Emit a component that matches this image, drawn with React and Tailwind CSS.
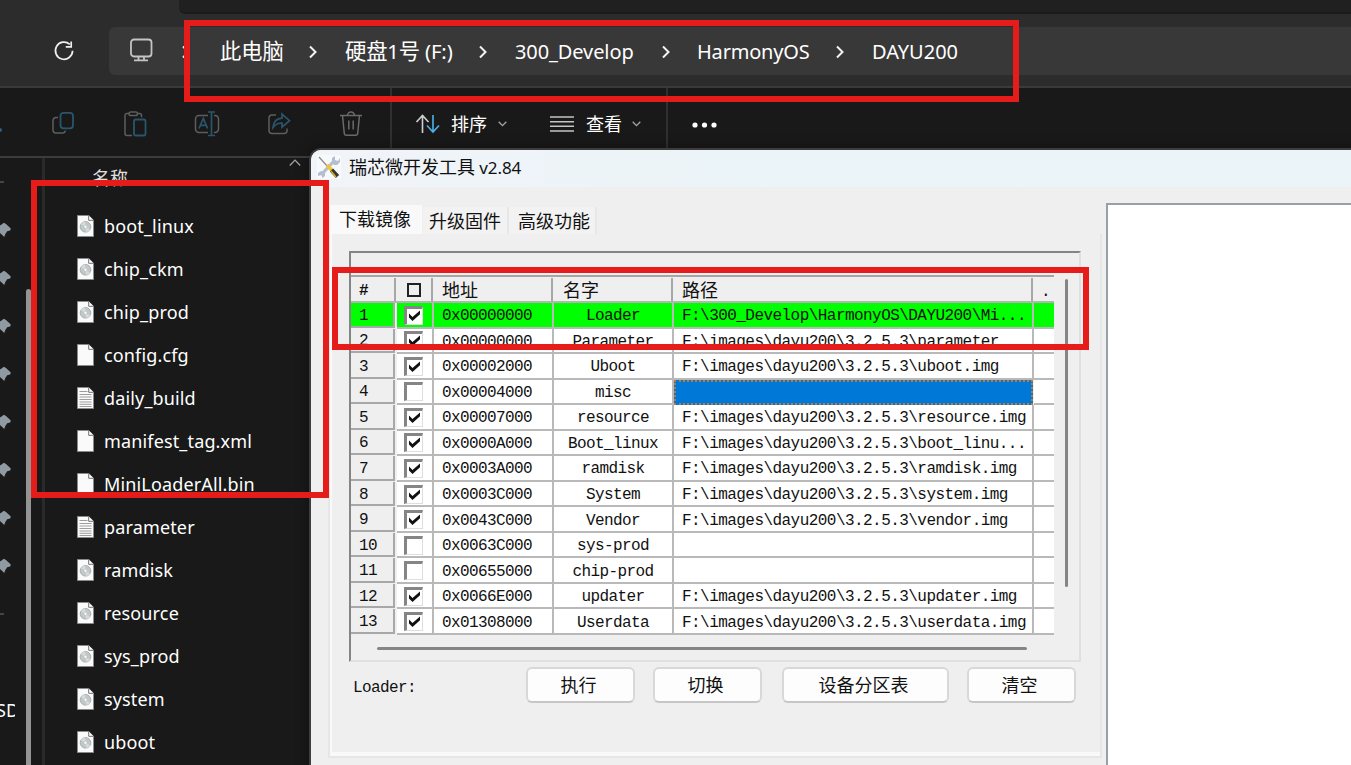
import React from 'react';

const files = [
  ['boot_linux', 'disc'],
  ['chip_ckm', 'disc'],
  ['chip_prod', 'disc'],
  ['config.cfg', 'blank'],
  ['daily_build', 'text'],
  ['manifest_tag.xml', 'blank'],
  ['MiniLoaderAll.bin', 'blank'],
  ['parameter', 'text'],
  ['ramdisk', 'disc'],
  ['resource', 'disc'],
  ['sys_prod', 'disc'],
  ['system', 'disc'],
  ['uboot', 'disc'],
];

const rows = [
  [true, '0x00000000', 'Loader', 'F:\\300_Develop\\HarmonyOS\\DAYU200\\Mi...'],
  [true, '0x00000000', 'Parameter', 'F:\\images\\dayu200\\3.2.5.3\\parameter'],
  [true, '0x00002000', 'Uboot', 'F:\\images\\dayu200\\3.2.5.3\\uboot.img'],
  [false, '0x00004000', 'misc', ''],
  [true, '0x00007000', 'resource', 'F:\\images\\dayu200\\3.2.5.3\\resource.img'],
  [true, '0x0000A000', 'Boot_linux', 'F:\\images\\dayu200\\3.2.5.3\\boot_linu...'],
  [true, '0x0003A000', 'ramdisk', 'F:\\images\\dayu200\\3.2.5.3\\ramdisk.img'],
  [true, '0x0003C000', 'System', 'F:\\images\\dayu200\\3.2.5.3\\system.img'],
  [true, '0x0043C000', 'Vendor', 'F:\\images\\dayu200\\3.2.5.3\\vendor.img'],
  [false, '0x0063C000', 'sys-prod', ''],
  [false, '0x00655000', 'chip-prod', ''],
  [true, '0x0066E000', 'updater', 'F:\\images\\dayu200\\3.2.5.3\\updater.img'],
  [true, '0x01308000', 'Userdata', 'F:\\images\\dayu200\\3.2.5.3\\userdata.img'],
];

function FileIcon({ kind }) {
  return (
    <svg width="18" height="23" viewBox="0 0 18 23" className="shrink-0">
      <path d="M.5.5h11.200l4.800 4.800v16.200H.5z" fill="#fafafa" stroke="#8a8a8a" />
      <path d="M11.700.5v4.800h4.800" fill="#fff" stroke="#6f6f6f" />
      {kind === 'disc' && (
        <g>
          <circle cx="8.500" cy="11.800" r="5.300" fill="#c2c7c8" stroke="#a3a9ab" strokeWidth=".9" />
          <path d="M8.500 11.800 4 9.200A5.200 5.200 0 0 1 8 6.600zM8.500 11.800l4.500 2.600a5.200 5.200 0 0 1-4 2.600z" fill="#d5dadb" />
          <circle cx="8.500" cy="11.800" r="1.500" fill="#fff" stroke="#b9bdbf" strokeWidth=".6" />
        </g>
      )}
      {kind === 'text' && (
        <path d="M2.500 4.500h8M2.500 7.500h12M2.500 10h12M2.500 12.500h12M2.500 15h12M2.500 17.300h12M2.500 19.500h12" stroke="#9d9d9d" strokeWidth="1" />
      )}
    </svg>
  );
}

function Crumb({ className, children }) {
  return <span className={'shrink-0 whitespace-nowrap leading-[30px] ' + className}>{children}</span>;
}

function Chevron({ className }) {
  return (
    <svg width="8" height="14" viewBox="0 0 8 14" className={'mt-[2px] shrink-0 ' + className}>
      <path d="M1 1.500 6.500 7 1 12.500" fill="none" stroke="#f2f2f2" strokeWidth="2" />
    </svg>
  );
}

function Down() {
  return (
    <svg width="9" height="6" viewBox="0 0 9 6" className="shrink-0">
      <path d="M.7.8 4.500 4.600 8.300.8" fill="none" stroke="#a6a6a6" strokeWidth="1.300" />
    </svg>
  );
}

function Pin() {
  return (
    <svg width="11" height="16" viewBox="0 0 11 16" className="shrink-0">
      <path d="M0 3.500 4 .8 6 2l4.800 4.500-.6 2-3 .8-2 3L4.300 15 0 11z" fill="#8f9aa2" />
    </svg>
  );
}

function Check({ on }) {
  return (
    <span className="flex h-[19px] w-[19px] shrink-0 items-start justify-center border-t-[3px] border-l-[3px] border-r border-b border-t-[#858585] border-l-[#858585] border-r-[#dedede] border-b-[#dedede] bg-white">
      {on && (
        <svg width="13" height="12" viewBox="0 0 13 12" className="mt-px">
          <path d="M1 3.600v4l3.500 3.300L12 4.200V.4L4.500 6.900z" fill="#111" />
        </svg>
      )}
    </span>
  );
}

function ToolbarIcons() {
  const s = { fill: 'none', strokeWidth: 1.5 };
  return (
    <div className="flex h-full items-center pt-[4px]">
      <div className="h-[4px] w-[2px] mt-3 rounded-r bg-[#27617c]" />
      <svg className="ml-[49px]" width="24" height="26" viewBox="0 0 24 26" {...s}>
        <path d="M7 6.500H5A3 3 0 0 0 2 9.500v9.500a3 3 0 0 0 3 3h6.500a3 3 0 0 0 3-2.300" stroke="#5e5e5e" />
        <rect x="9.500" y="1.800" width="12.500" height="15.500" rx="3" stroke="#2a566d" strokeWidth="1.800" />
      </svg>
      <svg className="ml-[48px]" width="24" height="26" viewBox="0 0 24 26" {...s}>
        <path d="M6 2.500H4A2 2 0 0 0 2 4.500v18a2 2 0 0 0 2 2h5M14.500 2.500h2a2 2 0 0 1 2 2v1.800" stroke="#5e5e5e" />
        <rect x="6" y="1" width="8.500" height="3.600" rx="1.800" stroke="#5e5e5e" />
        <rect x="11" y="8.500" width="11.500" height="16" rx="1.800" stroke="#2a566d" strokeWidth="1.800" />
      </svg>
      <svg className="ml-[47px]" width="26" height="26" viewBox="0 0 26 26" {...s}>
        <path d="M14 4.500H5a3.500 3.500 0 0 0-3.500 3.500v10A3.500 3.500 0 0 0 5 21.500h9M20 4.500h1a3.500 3.500 0 0 1 3.500 3.500v10a3.500 3.500 0 0 1-3.500 3.500h-1" stroke="#5e5e5e" />
        <path d="M5 17.500 9.300 7.500l4.300 10M6.300 14.300h6M14 1h7M14 24.500h7M17.500 1v23.500" stroke="#2a566d" strokeWidth="1.700" />
      </svg>
      <svg className="ml-[47px]" width="24" height="26" viewBox="0 0 24 26" {...s}>
        <path d="M9 4H5a3 3 0 0 0-3 3v12.500a3 3 0 0 0 3 3h12a3 3 0 0 0 3-3V17.500" stroke="#5e5e5e" />
        <path d="M15 3.200v4C9.500 7.500 6.500 11.500 6 16.500c2.500-3.500 5.200-4.500 9-4.500v4.200l7.500-6.500z" stroke="#2a566d" strokeWidth="1.700" />
      </svg>
      <svg className="ml-[48px]" width="24" height="26" viewBox="0 0 24 26" {...s}>
        <path d="M1 4.500h22M8.500 4.500a3.500 3.500 0 0 1 7 0M3.500 4.500l1.800 18A2.200 2.200 0 0 0 7.500 24.300h9a2.200 2.200 0 0 0 2.200-1.800l1.800-18M9.800 9.500v9M14.200 9.500v9" stroke="#6a6a6a" />
      </svg>
    </div>
  );
}

const cols = 'grid grid-cols-[46px_37px_120px_120px_360px_20px]';

function Table() {
  const head = 'mr-px mt-px flex items-center border-r-2 border-[#a8a8a8] ';
  return (
    <div className="w-[703px] font-['Liberation_Mono','Noto_Sans_CJK_SC',monospace] text-[16px] leading-none tracking-[-0.6px] text-[#111]">
      <div className={cols + ' h-[28px] border-y-2 border-[#a5a5a5] border-b-[#b4b4b4] bg-[#efefef]'}>
        <div className={head + 'pl-[8px] pt-[2px] font-bold'}>#</div>
        <div className={head + 'justify-center'}>
          <span className="h-[14px] w-[14px] border-2 border-[#222]" />
        </div>
        <div className={head + 'pl-[8px] pt-[4px] text-[18px] tracking-normal'}>地址</div>
        <div className={head + 'pl-[9px] pt-[4px] text-[18px] tracking-normal'}>名字</div>
        <div className={head + 'pl-[8px] pt-[4px] text-[18px] tracking-normal'}>路径</div>
        <div className="flex items-center pl-[7px] pt-[6px]">.</div>
      </div>
      <div className="grid h-[332px] grid-rows-[repeat(13,minmax(0,1fr))]">
        {rows.map(([on, addr, name, path], i) => {
          const bg = i === 0 ? 'bg-[#00ff00]' : 'bg-white';
          const cell = 'flex items-center border-b-2 border-r-2 border-[#b9b9b9] ' + bg;
          return (
            <div key={i} className={cols}>
              <div className={'mr-[2px] mb-px flex items-center border-b-2 border-r-2 border-[#a8a8a8] pl-[8px] pt-[3px] ' + (i === 0 ? 'bg-[#00ff00]' : 'bg-[#efefef]')}>{i + 1}</div>
              <div className={cell + ' justify-center pr-[2px] pt-px'}><Check on={on} /></div>
              <div className={cell + ' pl-[8px] pt-[3px]'}>{addr}</div>
              <div className={cell + ' justify-center pt-[3px]'}>{name}</div>
              {i === 3 ? (
                <div className="mr-[1px] border-2 border-dotted border-[#c07a35] bg-[#0078d7]" />
              ) : (
                <div className={cell + ' whitespace-nowrap pl-[8px] pt-[3px] tracking-[-0.550px]'}>{path}</div>
              )}
              <div className={'border-b-2 border-[#b9b9b9] ' + bg} />
            </div>
          );
        })}
      </div>
    </div>
  );
}

function Button({ className, children }) {
  return (
    <button className={'h-[36px] rounded-[6px] border-2 border-[#d8d8d8] border-b-[#c6c6c6] bg-[#fdfdfd] pb-[2px] pr-[4px] text-[18px] leading-none text-[#111] ' + className}>
      {children}
    </button>
  );
}

function ToolWindow() {
  return (
    <div className="absolute left-[309px] top-[148px] flex h-[630px] w-[1060px] flex-col overflow-hidden rounded-tl-[12px] border-2 border-[#3d3d3d] bg-[#efefef] font-['Noto_Sans_CJK_SC',sans-serif] text-[#111] shadow-[0_0_14px_rgba(0,0,0,0.35)]">
      <div className="flex h-[37px] shrink-0 items-center bg-linear-to-r from-[#f1f4f9] to-[#ebf4f8] to-40% pb-[4px] pl-[6px]">
        <svg width="24" height="24" viewBox="0 0 24 24">
          <rect width="24" height="24" fill="#f8f9fb" />
          <path d="m4 20 13-14" stroke="#b3bfd0" strokeWidth="3.200" />
          <path d="M15 7V3l3-2v4l3 1 2-3v4l-3 3h-3zM1 18l3-2 4 1v4l-3 2v-3l-4 1z" fill="#b3bfd0" />
          <path d="m2 2 9 10" stroke="#8a8f94" strokeWidth="1.300" />
          <path d="m10 10 5 5.500" stroke="#f0c537" strokeWidth="3.600" />
          <path d="m14.500 15 6 6.500" stroke="#35352a" strokeWidth="4.400" />
          <path d="m14 16 5 6" stroke="#d9b92f" strokeWidth="1.200" />
        </svg>
        <span className="ml-[8px] whitespace-pre text-[18px] leading-none">瑞芯微开发工具<span className="font-['Noto_Sans',sans-serif] text-[17px] tracking-[-0.1px]"> v2.84</span></span>
      </div>
      <div className="flex min-h-0 flex-1">
        <div className="flex w-[791px] shrink-0 flex-col pl-[17px] pt-[18px]">
          <div className="flex h-[29px] items-end pl-[2px] text-[18px] leading-none">
            <div className="flex h-[29px] w-[92px] items-center bg-[#f9f9f9] pb-[4px] pl-[9px]">下载镜像</div>
            <div className="ml-[1px] flex h-[27px] w-[86px] items-center border-r-2 border-[#e7e7e7] bg-[#f2f2f2] pl-[6px] pb-[2px]">升级固件</div>
            <div className="flex h-[27px] w-[88px] items-center border-r-2 border-[#e7e7e7] bg-[#f2f2f2] pl-[9px] pb-[2px]">高级功能</div>
          </div>
          <div className="flex h-[524px] w-[774px] flex-col border-2 border-t-0 border-[#e6e6e6]">
            <div className="flex flex-1 flex-col border-b-4 border-l-2 border-[#f9f9f9] pl-[17px] pt-[17px]">
              <div className="flex h-[411px] w-[732px] border-2 border-b-[#e0e0e0] border-l-[#858585] border-r-[#e0e0e0] border-t-[#858585]">
                <div className="w-[703px] shrink-0 pt-[22px]">
                  <Table />
                  <div className="ml-[26px] mt-[12px] h-[3px] w-[650px] rounded bg-[#858585]" />
                </div>
                <div className="ml-[11px] mt-[26px] h-[308px] w-[3px] rounded bg-[#858585]" />
              </div>
              <div className="flex items-center pl-[4px] pt-[5px]">
                <span className="w-[173px] pt-[6px] font-['Liberation_Mono',monospace] text-[16px] tracking-[-0.6px]">Loader:</span>
                <Button className="w-[109px]">执行</Button>
                <Button className="ml-[18px] w-[109px]">切换</Button>
                <Button className="ml-[20px] w-[167px]">设备分区表</Button>
                <Button className="ml-[18px] w-[109px]">清空</Button>
              </div>
            </div>
          </div>
        </div>
        <div className="mt-[16px] ml-[4px] flex-1 border-l-2 border-t-2 border-[#999fa8] bg-white" />
      </div>
    </div>
  );
}

export default function App() {
  return (
    <div className="relative flex h-[765px] w-[1351px] flex-col overflow-hidden bg-[#191919] font-['Noto_Sans','Noto_Sans_CJK_SC',sans-serif] text-white">
      <div className="flex h-[88px] shrink-0 flex-col border-b-2 border-[#3a3a3a] bg-[#2c2c2c]">
        <div className="ml-[179px] h-[14px] rounded-bl-[6px] border-b-2 border-[#1b1b1b] bg-[#202020]" />
        <div className="mt-[13px] flex h-[48px] items-center">
          <svg className="ml-[53px]" width="22" height="22" viewBox="0 0 22 22" fill="none" stroke="#f0f0f0" strokeWidth="1.700">
            <path d="M16.800 4.300A8.600 8.600 0 1 0 19.600 10.800" />
            <path d="M18.200 1.500v5.300h-5.400" />
          </svg>
          <div className="ml-[34px] flex h-[48px] flex-1 items-center rounded-l-[6px] bg-[#383838]">
            <svg className="mb-[2px] ml-[20px]" width="24" height="24" viewBox="0 0 24 24" fill="none" stroke="#c4c4c4" strokeWidth="1.800">
              <rect x="2" y="1.500" width="20.500" height="17" rx="3" />
              <path d="M9.500 18v4M15 18v4M5 22.300h14" />
            </svg>
            <Chevron className="ml-[29px]" />
            <Crumb className="ml-[30px] w-[89px] text-[21.300px]">此电脑</Crumb>
            <Chevron className="" />
            <Crumb className="ml-[28px] w-[134px] text-[20.300px] tracking-[-0.150px]"><span className="text-[21.300px]">硬盘</span>1<span className="text-[21.300px]">号</span> (F:)</Crumb>
            <Chevron className="" />
            <Crumb className="ml-[28px] w-[147px] pt-px text-[20px] tracking-[-0.1px]">300_Develop</Crumb>
            <Chevron className="" />
            <Crumb className="ml-[27px] w-[139px] pt-px text-[20px] tracking-[-0.2px]">HarmonyOS</Crumb>
            <Chevron className="" />
            <Crumb className="ml-[28px] pt-px text-[20px]">DAYU200</Crumb>
          </div>
        </div>
      </div>
      <div className="flex h-[70px] shrink-0 items-center border-b-2 border-[#3c3c3c] text-[18px]">
        <ToolbarIcons />
        <div className="ml-[27px] h-full w-[2px] bg-[#303030]" />
        <div className="flex items-center pt-[4px]">
          <svg className="ml-[23px]" width="26" height="20" viewBox="0 0 26 20" fill="none" strokeWidth="1.600">
            <path d="M7.500 19V1.500M1.500 8l6-6.500 6 6.500" stroke="#cfcfcf" />
            <path d="M18 1v17M12 11.500l6 6.500 6-6.500" stroke="#4cb2ea" />
          </svg>
          <span className="ml-[10px] w-[47px]">排序</span>
          <Down />
          <svg className="ml-[43px]" width="24" height="16" viewBox="0 0 24 16" stroke="#c4c4c4" strokeWidth="1.500">
            <path d="M0 1h24M0 5.700h24M0 10.300h24M0 15h24" />
          </svg>
          <span className="ml-[12px] w-[46px]">查看</span>
          <Down />
        </div>
        <div className="ml-[25px] h-full w-[2px] bg-[#303030]" />
        <svg className="ml-[24px] mt-[5px]" width="26" height="6" viewBox="0 0 26 6" fill="#fff">
          <circle cx="3" cy="3" r="2.600" /><circle cx="12.500" cy="3" r="2.600" /><circle cx="22" cy="3" r="2.600" />
        </svg>
      </div>
      <div className="flex min-h-0 flex-1">
        <div className="flex w-[26px] shrink-0 flex-col overflow-hidden">
          <div className="mt-[23px] h-[2px] w-[4px] shrink-0 bg-[#444]" />
          <div className="mt-[23px] flex flex-col">
            {[0, 1, 2, 3, 4, 5, 6, 7].map((n) => (
              <div key={n} className="flex h-[48px] items-center"><Pin /></div>
            ))}
          </div>
          <div className="mt-[23px] h-[2px] w-[4px] shrink-0 bg-[#444]" />
          <div className="mt-[81px] flex h-[28px] w-[15px] shrink-0 items-center overflow-hidden text-[18px]"><span className="-ml-[4px]">SD</span></div>
        </div>
        <div className="mt-[131px] w-[5px] rounded-t bg-[#949494]" />
        <div className="ml-[11px] w-[3px] bg-[#2a2a2a]" />
        <div className="flex w-[264px] flex-col">
          <div className="flex h-[47px] shrink-0 items-start">
            <span className="ml-[47px] mt-[6px] w-[197px] text-[18px] leading-[28px] text-[#e0e0e0]">名称</span>
            <svg width="12" height="8" viewBox="0 0 12 8" fill="none" stroke="#a8a8a8" strokeWidth="1.200" className="mt-px"><path d="m.800 6.500 5.200-5.300 5.200 5.300" /></svg>
          </div>
          {files.map(([name, kind]) => (
            <div key={name} className="flex h-[43px] shrink-0 items-center pl-[32px]">
              <FileIcon kind={kind} />
              <span className="ml-[9px] whitespace-nowrap text-[18px] tracking-[0.15px]">{name}</span>
            </div>
          ))}
        </div>
      </div>
      <ToolWindow />
      <div className="absolute left-[184px] top-[20px] h-[82px] w-[835px] border-[6px] border-[#e61c1b]" />
      <div className="absolute left-[31px] top-[180px] h-[318px] w-[298px] border-[6px] border-[#e61c1b]" />
      <div className="absolute left-[332px] top-[267px] h-[83px] w-[757px] border-[6px] border-[#e61c1b]" />
    </div>
  );
}
